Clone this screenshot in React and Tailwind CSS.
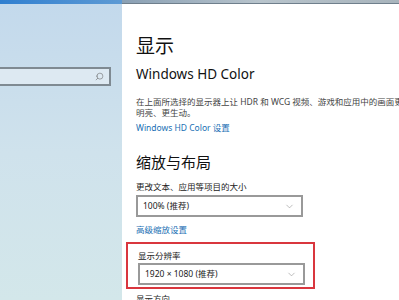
import { ChevronDown, Search } from 'lucide-react'

const font = { fontFamily: '"Noto Sans", "Noto Sans CJK SC", sans-serif' }

function Dropdown({ value }) {
  return (
    <div className="flex items-center justify-between w-[167px] h-[22px] border-2 border-[#999] bg-white pl-[5px] pr-[6px]">
      <span className="text-[8.5px] text-[#222] leading-none">{value}</span>
      <ChevronDown size={11} strokeWidth={1.2} className="text-[#888]" />
    </div>
  )
}

export default function App() {
  return (
    <div className="w-[399px] h-[300px] overflow-hidden flex flex-col bg-white" style={font}>
      <div className="h-[4px] flex shrink-0">
        <div className="w-[122px] bg-gradient-to-r from-[#2f7fd0] to-[#5d9ad4]" />
        <div className="flex-1 bg-gradient-to-r from-[#8aa0b4] via-[#b8c4cc] to-[#a8b4bc] border-b border-[#6f7f8c]" />
      </div>
      <div className="flex flex-1 min-h-0">
        <div className="w-[122px] shrink-0 bg-gradient-to-b from-[#c3d9ec] via-[#cfe2ec] to-[#d3e7ea] pt-[63px]">
          <div className="flex items-center justify-end h-[19px] w-[111px] border-2 border-[#7f8a92] border-l-0 bg-[#dde9f2] pr-[5px]">
            <Search size={9} strokeWidth={1.5} className="text-[#666] -scale-x-100" />
          </div>
        </div>
        <div className="flex-1 min-w-0 overflow-hidden pl-[14px] pt-[30px] whitespace-nowrap">
          <h1 className="text-[19px] leading-[24px] text-[#111]">显示</h1>
          <h2 className="mt-[7px] text-[13.5px] leading-[18px] text-[#111]">Windows HD Color</h2>
          <p className="mt-[13px] text-[8.5px] leading-[11px] text-[#444]">在上面所选择的显示器上让 HDR 和 WCG 视频、游戏和应用中的画面更</p>
          <p className="text-[8.5px] leading-[11px] text-[#444]">明亮、更生动。</p>
          <p className="mt-[4px] text-[8.5px] leading-[11px] text-[#1a6fb4]">Windows HD Color 设置</p>
          <h2 className="mt-[19px] text-[15px] leading-[20px] text-[#111]">缩放与布局</h2>
          <p className="mt-[9px] text-[8.5px] leading-[11px] text-[#222]">更改文本、应用等项目的大小</p>
          <div className="mt-[3px]">
            <Dropdown value="100% (推荐)" />
          </div>
          <p className="mt-[7px] text-[8.5px] leading-[11px] text-[#1a6fb4]">高级缩放设置</p>
          <div className="mt-[7px] -ml-[10px] w-[189px] border-2 border-[#d9363e] pl-[10px] pt-[6px] pb-[2px]">
            <p className="text-[8.5px] leading-[11px] text-[#222]">显示分辨率</p>
            <div className="mt-[2px]">
              <Dropdown value="1920 × 1080 (推荐)" />
            </div>
          </div>
          <p className="mt-[4px] text-[8.5px] leading-[11px] text-[#222]">显示方向</p>
        </div>
      </div>
    </div>
  )
}
